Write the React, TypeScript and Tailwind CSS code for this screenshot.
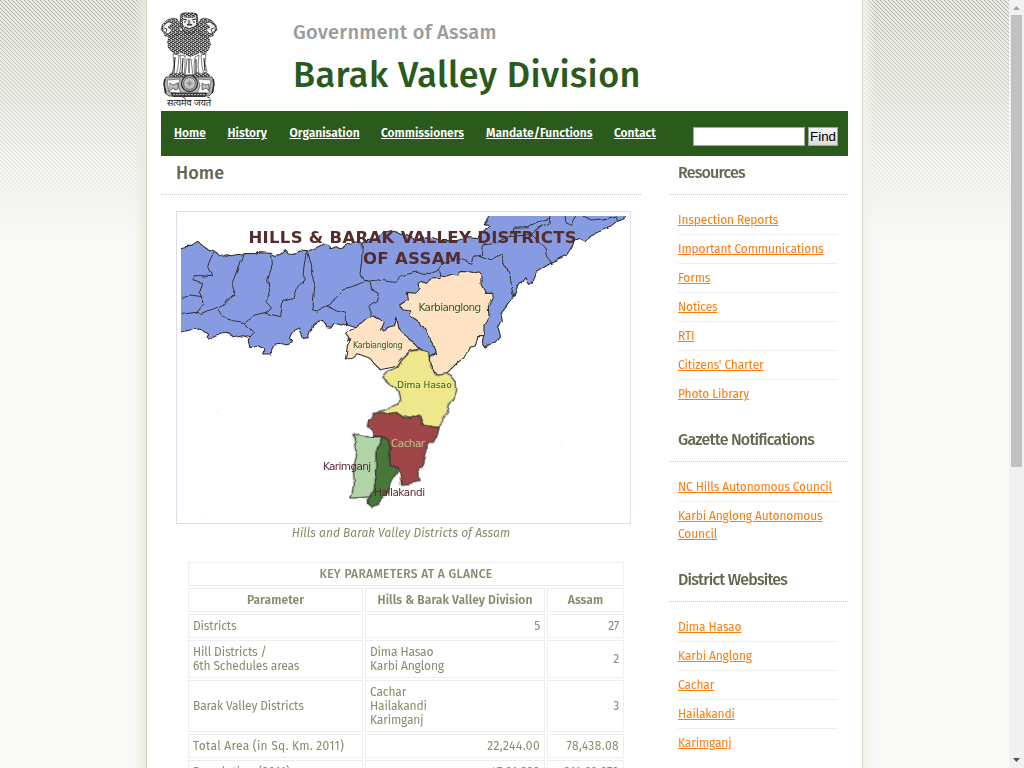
import React from 'react';

const navItems = [
  { label: 'Home', width: 'w-[53.5px]' },
  { label: 'History', width: 'w-[62px]' },
  { label: 'Organisation', width: 'w-[91.5px]' },
  { label: 'Commissioners', width: 'w-[105px]' },
  { label: 'Mandate/Functions', width: 'w-[128px]' },
  { label: 'Contact', width: 'w-[79px]' },
];

const sections = [
  {
    title: 'Resources',
    links: ['Inspection Reports', 'Important Communications', 'Forms', 'Notices', 'RTI', "Citizens' Charter", 'Photo Library'],
  },
  { title: 'Gazette Notifications', links: ['NC Hills Autonomous Council', 'Karbi Anglong Autonomous Council'] },
  { title: 'District Websites', links: ['Dima Hasao', 'Karbi Anglong', 'Cachar', 'Hailakandi', 'Karimganj'] },
];

function Emblem() {
  return (
    <svg className="h-[98px] w-[56px] overflow-visible" viewBox="0 0 56 98" fill="none" stroke="#2a2a2a" strokeWidth=".8">
      <defs>
        <pattern id="fur" width="4" height="4" patternUnits="userSpaceOnUse">
          <rect width="4" height="4" fill="#8c8c8c" stroke="none" />
          <path d="M0 0l2 2 2-2M0 2l2 2 2-2" stroke="#262626" strokeWidth=".8" />
          <path d="M0 1.2h1M2 3.2h1" stroke="#fff" strokeWidth="1" />
        </pattern>
      </defs>
      <path d="M11 18L8 23l-2 5 1 7 5 5 3 2 5-2 4 2 5 2 5-2 5-2 4 2 4-4 3-6-2-9-6-8z" fill="url(#fur)" stroke="none" />
      <path d="M12 5L6 7 1 12 0 17l3 3 1 3 6 1 7-3 3-8-4-7z" fill="url(#fur)" strokeWidth=".5" />
      <path d="M44 5l6 2 5 5 1 5-3 3-1 3-6 1-7-3-3-8 4-7z" fill="url(#fur)" strokeWidth=".5" />
      <path d="M2 13l5-4 5 1-5 4 4 3-4 4-5-3zM54 13l-5-4-5 1 5 4-4 3 4 4 5-3z" fill="#f4f4f4" strokeWidth=".6" />
      <path d="M3 15l3 1-1 3M53 15l-3 1 1 3" />
      <path d="M20 1l3-1h9l4 1 1 9-2 6-3 4h-8l-3-4-2-7z" fill="url(#fur)" />
      <path d="M22 4l4 1h5l4-1v7l-3 4-4 2-4-2-2-4z" fill="#eee" stroke="none" />
      <path d="M22 6l4 1M35 6l-4 1M23 9h2M32 9h2M28 7v4l-2 1h5l-2-1M24 14l4 2 5-2" strokeWidth="1.1" />
      <path d="M12 41l1 11-2 9 4 2 2-9 1-12zM19 42l1 10-2 10h5l1-9V43zM26 46l-1 9-1 7h8l-1-7-1-9zM34 44l-1 10 1 8h4l-1-9 1-11zM40 42l1 11 2 9 3-3-2-9 1-9z" fill="#fff" strokeWidth=".6" />
      <path d="M14 44l-1 15M22 45l-1 14M28 46v14M35 46v14M43 45l1 13" strokeWidth="1.1" />
      <path d="M8 62l4-3 4 2 5-2 4 3h7l4-3 4 2 4-2 5 3-2 3H10z" fill="url(#fur)" strokeWidth=".4" />
      <path d="M5 64h46l2 4-1 11-4 4H8l-4-3-1-12z" fill="#b5b5b5" />
      <path d="M6 67l13-1-2 6 3 9-12-2zM37 66l13 1-2 13-12 1 3-8z" fill="#fafafa" strokeWidth=".5" />
      <path d="M8 70l4 2 5-2v6l-3 1-1-2-4 2-1 2M41 70l3 2 4-1v7l-3-3-4 2z" fill="#bbb" strokeWidth=".6" />
      <path d="M4 66l-1 6 2 8M52 66l1 6-2 8" strokeWidth="1.4" />
      <circle cx="28.500" cy="70.500" r="8" fill="#aaa" strokeWidth="1.200" />
      <circle cx="28.500" cy="70.500" r="5.800" fill="#e4e4e4" strokeWidth=".6" />
      <path d="M22 70.500h13M28.500 64v13M24 66l9 9M33 66l-9 9M26 64.500l5 12M31 64.500l-5 12M22.500 68l12 5M34.500 68l-12 5" stroke="#777" strokeWidth=".5" />
      <path d="M10 80h36l-2 3.500H12z" fill="#444" />
      <path d="M12 81.500h33" stroke="#ccc" strokeDasharray="2 1" />
      <text x="6" y="93" textLength="44" lengthAdjust="spacingAndGlyphs" fill="#222" stroke="none" className="font-['Noto_Sans_Devanagari','Lohit_Devanagari',FreeSans,sans-serif] text-[9px]">
        सत्यमेव जयते
      </text>
    </svg>
  );
}

const boundaries = [
  '133,143 122,160 113,185 125,215 95,212 72,212 72,228 98,232 90,260 98,275 98,300 78,327',
  '33,280 65,270 98,275',
  '33,328 78,322 98,325 140,306 160,300 175,285 195,268 185,250 200,210 210,180 218,150',
  '140,306 155,335 190,348 225,352 250,385 238,398',
  '225,352 255,333 288,325 305,310 288,290 300,265 293,225 307,180 305,145',
  '288,325 332,335 338,290 370,280 380,245 402,225 405,180 412,142',
  '412,142 425,180 425,210 435,240 430,290 425,315 440,318 470,303 500,280 530,250 560,240 582,230 570,205 575,170 577,112',
  '470,303 500,318 528,325 530,357',
  '582,230 600,232 605,255 628,265 622,290 600,305 600,335',
  '582,230 625,225 655,230 675,232 695,212 735,202 780,202 805,192 825,175 865,160 905,175 915,150 937,148 940,120 975,115 1020,95 1085,88 1105,70 1137,55 1140,33',
  '805,192 810,215',
  '925,150 965,165 995,145 1005,175 1020,210 1025,250 1032,275',
  '1020,95 1030,70 1075,68 1110,50 1137,40',
  '1085,88 1105,110 1125,130 1130,155 1145,172',
  '1185,33 1187,50 1205,58 1220,33',
  '1235,33 1265,45 1315,40 1340,33 1342,50',
];

function DistrictMap() {
  return (
    <svg className="block h-[303px] w-[445px] font-['DejaVu_Sans',sans-serif]" viewBox="181 216 445 303">
      <defs>
        <filter id="coast" x="-5%" y="-5%" width="110%" height="110%" colorInterpolationFilters="sRGB">
          <feTurbulence type="fractalNoise" baseFrequency="0.1" numOctaves="1" seed="4" />
          <feDisplacementMap in="SourceGraphic" scale="6" xChannelSelector="R" yChannelSelector="G" />
        </filter>
      </defs>
      <g filter="url(#coast)">
        <g transform="translate(170 205) scale(.33333)" stroke="#33332e" strokeWidth="3.3" strokeLinejoin="round" fill="none">
          <polygon
            fill="#869be1"
            points="20,131 50,124 65,124 82,112 98,122 115,135 135,143 150,152 165,149 185,152 205,148 218,150 222,146 258,145 262,140 290,141 307,142 318,148 330,146 343,134 355,147 372,148 388,138 412,140 430,131 448,124 462,115 474,120 480,131 496,125 512,131 528,117 545,121 560,114 575,112 590,104 610,102 622,100 632,90 650,80 670,76 680,78 695,85 735,103 785,97 815,107 860,107 895,95 925,98 937,85 947,68 960,62 943,53 953,40 960,20 1378,20 1368,35 1360,42 1340,50 1325,62 1310,72 1285,82 1265,92 1245,108 1228,100 1215,108 1205,125 1190,150 1170,160 1145,170 1125,182 1105,195 1095,215 1087,235 1075,238 1065,215 1050,235 1040,250 1032,275 1020,290 1005,310 993,325 997,345 985,370 992,395 975,415 960,418 945,426 940,415 945,385 800,440 780,458 765,440 748,430 530,357 515,363 495,358 487,370 470,368 458,350 445,348 425,362 415,398 400,400 395,385 388,368 372,375 362,390 358,400 368,410 355,415 330,418 315,420 300,450 278,450 285,430 265,418 240,425 235,405 238,398 220,392 190,398 170,385 140,390 115,402 108,400 113,385 100,375 85,372 60,375 20,385"
          />
          {boundaries.map((points) => (
            <polyline key={points} points={points} strokeWidth="3" />
          ))}
          <polygon fill="#ffe3c4" points="530,385 540,398 532,408 543,402 532,425 526,465 550,455 562,446 580,452 600,460 615,478 632,495 660,488 680,482 695,460 720,435 748,430 735,415 720,405 700,385 683,365 678,340 670,362 655,365 640,382 632,375 640,350 628,342 610,333 590,340 572,355 555,365" />
          <polygon fill="#ffe3c4" points="777,458 800,445 790,415 775,390 750,355 735,345 720,335 725,318 697,315 692,300 715,285 712,262 735,265 750,250 747,235 757,228 765,232 785,222 810,220 810,212 825,215 847,207 860,210 870,200 890,200 910,207 925,203 933,210 933,235 947,262 965,262 967,275 955,305 957,335 945,360 945,395 920,395 913,425 900,430 885,455 860,475 835,500 825,508 798,508 780,475" />
          <g transform="translate(420 390)">
            <polygon fill="#efe78b" points="260,95 270,75 300,45 325,42 355,52 360,88 378,118 408,113 422,120 438,140 440,165 432,190 418,210 412,235 395,262 385,275 340,268 328,240 300,250 275,245 258,232 245,238 210,235 205,230 235,220 262,205 272,195 268,170 235,145 218,130 235,110" />
            <polygon fill="#9e4648" points="192,235 215,232 240,240 258,232 278,245 300,250 328,242 340,268 388,275 382,300 370,325 348,325 348,345 335,395 325,400 330,440 300,445 275,448 265,395 240,392 240,345 235,315 215,305 192,302 190,285 172,275 175,255 192,250" />
            <polygon fill="#b2d4a9" points="128,295 160,305 190,305 215,305 210,325 198,345 198,400 190,460 180,483 118,487 133,455 130,400 140,360 130,330 137,310" />
            <polygon fill="#48773a" points="198,345 210,320 218,305 235,315 240,345 240,392 265,395 262,410 245,440 235,470 205,505 188,520 175,510 175,490 190,460 198,400" />
          </g>
        </g>
      </g>
      <g fill="#552b2b" className="text-[16.5px] font-bold">
        <text x="248.500" y="242.500" textLength="328">HILLS &amp; BARAK VALLEY DISTRICTS</text>
        <text x="363" y="263.500" textLength="98">OF ASSAM</text>
      </g>
      <g fill="#2f5f27">
        <text x="418.500" y="311" textLength="62.500" className="text-[10.5px]">Karbianglong</text>
        <text x="353" y="347.500" textLength="49.500" className="text-[8px]">Karbianglong</text>
        <text x="397" y="388" textLength="54.500" className="text-[9px]">Dima Hasao</text>
      </g>
      <text x="391" y="447" textLength="34" fill="#b5c58f" className="text-[10.5px]">Cachar</text>
      <g fill="#592c30" className="text-[10.5px]">
        <text x="323" y="470" textLength="48">Karimganj</text>
        <text x="374" y="495.500" textLength="51">Hailakandi</text>
      </g>
      <g fill="#ddd">
        <rect x="217" y="411" width="1" height="1" />
        <rect x="561" y="442" width="1" height="1" />
        <rect x="205" y="516" width="1" height="1" />
      </g>
    </svg>
  );
}

function Backdrop() {
  return (
    <svg className="absolute inset-0 h-full w-full" aria-hidden="true">
      <defs>
        <pattern id="weave" width="4" height="4" patternUnits="userSpaceOnUse" shapeRendering="crispEdges">
          <rect width="4" height="4" fill="#ebebe4" />
          <path d="M0 0h1v1H0zM1 1h1v1H1zM2 2h1v1H2zM3 3h1v1H3z" fill="#b6b6ac" />
          <path d="M1 0h1v1H1zM2 1h1v1H2zM3 2h1v1H3zM0 3h1v1H0z" fill="#dcdcd4" />
        </pattern>
        <linearGradient id="fade" x1="0" y1="0" x2="0" y2="1">
          <stop offset="0" stopColor="#f9f9f7" stopOpacity="0" />
          <stop offset="1" stopColor="#f9f9f7" />
        </linearGradient>
      </defs>
      <rect width="100%" height="240" fill="url(#weave)" />
      <rect width="100%" height="240" fill="url(#fade)" />
    </svg>
  );
}

function Cell({ children, align = 'text-left', head = false, span = 1 }: { children: React.ReactNode; align?: string; head?: boolean; span?: number }) {
  const Tag = head ? 'th' : 'td';
  return (
    <Tag colSpan={span} className={`border border-[#eee] p-1 align-middle ${align}`}>
      {children}
    </Tag>
  );
}

function ParameterTable() {
  return (
    <table className="ml-[10px] w-[440px] table-fixed border-separate border-spacing-[2px] leading-[14px]">
      <colgroup>
        <col className="w-[175px]" />
        <col className="w-[180px]" />
        <col className="w-[77px]" />
      </colgroup>
      <tbody>
        <tr className="tracking-[0.33px] [&>th]:font-medium">
          <Cell head span={3} align="text-center">KEY PARAMETERS AT A GLANCE</Cell>
        </tr>
        <tr className="tracking-[0.08px] [&>th]:font-semibold">
          <Cell head align="text-center">Parameter</Cell>
          <Cell head align="text-center">Hills &amp; Barak Valley Division</Cell>
          <Cell head align="text-center">Assam</Cell>
        </tr>
        <tr>
          <Cell>Districts</Cell>
          <Cell align="text-right">5</Cell>
          <Cell align="text-right">27</Cell>
        </tr>
        <tr>
          <Cell>Hill Districts /<br />6th Schedules areas</Cell>
          <Cell>Dima Hasao<br />Karbi Anglong</Cell>
          <Cell align="text-right">2</Cell>
        </tr>
        <tr>
          <Cell>Barak Valley Districts</Cell>
          <Cell>Cachar<br />Hailakandi<br />Karimganj</Cell>
          <Cell align="text-right">3</Cell>
        </tr>
        <tr className="tracking-[0.4px]">
          <Cell align="text-left tracking-[0.24px]">Total Area (in Sq. Km. 2011)</Cell>
          <Cell align="text-right">22,244.00</Cell>
          <Cell align="text-right">78,438.08</Cell>
        </tr>
        <tr className="tracking-[0.4px]">
          <Cell align="text-left tracking-[0.24px]">Population (2011)</Cell>
          <Cell align="text-right">47,21,323</Cell>
          <Cell align="text-right">311,69,272</Cell>
        </tr>
      </tbody>
    </table>
  );
}

export default function App() {
  return (
    <div className="relative flex h-screen w-[1024px] overflow-hidden bg-[#f9f9f7] font-['Trebuchet_MS','Fira_Sans','Open_Sans',sans-serif] text-[12px] leading-[18px] tracking-[-0.14px] text-[#8a8a6c]">
      <Backdrop />
      <div className="relative w-[147px] shrink-0 border-r border-[#d6d7c8] bg-linear-to-r from-transparent from-[134px] to-[#e9eade]" />
      <div className="relative w-[715px] shrink-0 overflow-hidden bg-white pl-[14px]">
        <header className="flex h-[111px] w-[687px] pt-[13px]">
          <Emblem />
          <div className="ml-[76px] font-medium">
            <p className="mt-[5px] text-[20px] leading-[28px] tracking-[0.26px] text-[#9b9b9b]">Government of Assam</p>
            <h1 className="mt-[6px] text-[36px] leading-[46px] font-medium tracking-[0.4px] text-[#2a5a1c]">Barak Valley Division</h1>
          </div>
        </header>
        <nav className="flex h-[45px] w-[687px] bg-[#2a5a1c] pl-[13px] font-semibold tracking-normal text-white">
          {navItems.map((item) => (
            <a key={item.label} className={`${item.width} mt-[13px] shrink-0 underline underline-offset-1`}>
              {item.label}
            </a>
          ))}
          <form className="mt-4 flex gap-[3px]" onSubmit={(e) => e.preventDefault()}>
            <input className="h-[19px] w-[112px] border border-[#a5a5a5] bg-white" />
            <button className="h-[19px] w-[30px] border border-[#a5a5a5] bg-linear-to-b from-[#f5f5f5] to-[#dcdcdc] font-['Liberation_Sans',sans-serif] text-[13.33px] leading-[17px] font-normal text-black">
              Find
            </button>
          </form>
        </nav>
        <div className="flex w-[687px] justify-between">
          <main className="w-[480px]">
            <h2 className="h-[39px] border-b border-dotted border-[#c9c9c9] pt-[5px] pl-[15px] text-[18px] leading-6 font-medium tracking-[0.1px] text-[#666650]">Home</h2>
            <figure className="mt-4 ml-[15px] w-[455px]">
              <div className="h-[313px] border border-[#dcdcec] p-1">
                <DistrictMap />
              </div>
              <figcaption className="pr-[5px] text-center tracking-[0.04px] italic">Hills and Barak Valley Districts of Assam</figcaption>
              <div className="mt-[18px]">
                <ParameterTable />
              </div>
            </figure>
          </main>
          <aside className="w-[179px]">
            {sections.map((section) => (
              <section key={section.title} className="not-first:pt-[15px]">
                <h3 className="h-[39px] border-b border-dotted border-[#c9c9c9] pt-[5px] pl-[9px] text-[16px] leading-6 font-medium tracking-[-0.8px] text-[#666650]">
                  {section.title}
                </h3>
                <ul className="mr-[10px] ml-[9px] pt-[11px]">
                  {section.links.map((link) => (
                    <li key={link} className="border-b border-[#eee] py-[5px] text-[#fc7c0c] last:border-b-0">
                      <a className="underline underline-offset-1">{link}</a>
                    </li>
                  ))}
                </ul>
              </section>
            ))}
          </aside>
        </div>
      </div>
      <div className="relative flex-1 border-l border-[#d6d7c8] bg-linear-to-r from-[#f2f3ea] to-transparent to-[12px]" />
      <div className="relative flex w-[15px] shrink-0 flex-col items-center bg-[#f1f1f1]">
        <svg className="h-[15px] w-[9px]" viewBox="0 0 9 15" fill="#a3a3a3">
          <path d="M1 10h7L4.500 6z" />
        </svg>
        <div className="h-[452px] w-[11px] bg-[#c1c1c1]" />
        <svg className="mt-auto h-[15px] w-[9px]" viewBox="0 0 9 15" fill="#505050">
          <path d="M1 5h7L4.500 9z" />
        </svg>
      </div>
    </div>
  );
}
